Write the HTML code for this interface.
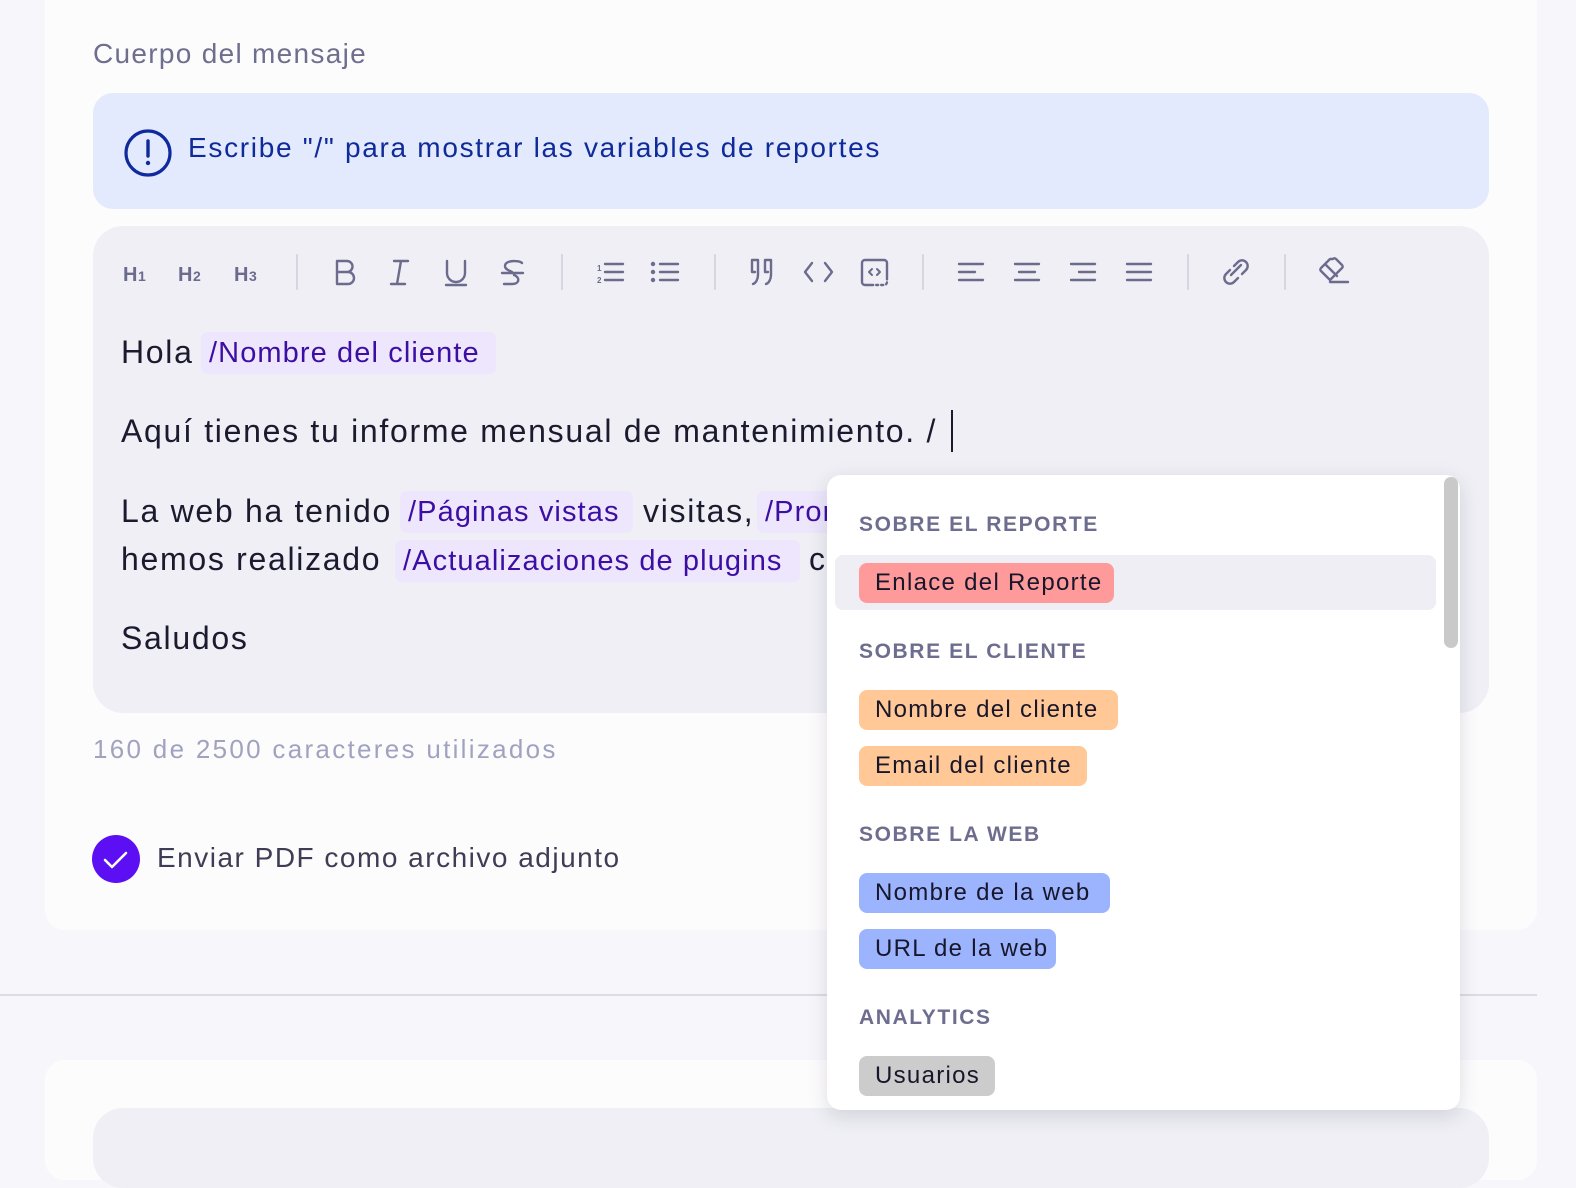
<!DOCTYPE html>
<html><head><meta charset="utf-8"><style>
*{margin:0;padding:0;box-sizing:border-box}
body{width:1576px;height:1136px;background:#f7f7fb;position:relative;overflow:hidden;font-family:"Liberation Sans",sans-serif}
.a{position:absolute;white-space:nowrap}
.t{font-size:32px;color:#1b1a2e;letter-spacing:1.7px;line-height:40px}
.tag{position:absolute;background:#ede6fc;border-radius:7px;color:#3d0ea3;font-size:29px;line-height:42px;padding-left:8px;letter-spacing:1.1px;white-space:nowrap;overflow:hidden}
.h{position:absolute;left:859px;font-size:21px;font-weight:bold;color:#6d6d8f;letter-spacing:1.6px;line-height:26px}
.p{position:absolute;left:859px;height:40px;border-radius:8px;font-size:24px;line-height:40px;padding-left:16px;color:#17162b;letter-spacing:1.3px;white-space:nowrap}
</style></head><body>
<div class="a" style="left:45px;top:-20px;width:1492px;height:950px;background:#fdfcfd;border-radius:20px"></div>
<div class="a" style="left:0;top:994px;width:1537px;height:2px;background:#dcdce6"></div>
<div class="a" style="left:45px;top:1060px;width:1492px;height:120px;background:#fdfcfd;border-radius:20px"></div>
<div class="a" style="left:93px;top:1108px;width:1396px;height:80px;background:#efeff5;border-radius:30px"></div>

<div class="a" style="left:93px;top:38px;font-size:28px;color:#6e6e8e;letter-spacing:1.3px">Cuerpo del mensaje</div>

<div class="a" style="left:93px;top:93px;width:1396px;height:116px;background:#e3eafd;border-radius:20px"></div>
<svg class="a" style="left:122px;top:128px" width="52" height="52"><circle cx="26" cy="25" r="22" fill="none" stroke="#0f2a9c" stroke-width="3.2"/><line x1="26" y1="13" x2="26" y2="28" stroke="#0f2a9c" stroke-width="3.4" stroke-linecap="round"/><circle cx="26" cy="35" r="2.2" fill="#0f2a9c"/></svg>
<div class="a" style="left:188px;top:132px;font-size:28px;color:#0f2a99;letter-spacing:1.7px">Escribe "/" para mostrar las variables de reportes</div>

<div class="a" style="left:93px;top:226px;width:1396px;height:487px;background:#efeff5;border-radius:30px"></div>

<svg class="a" style="left:0;top:240px" width="1400" height="64" fill="none" stroke="#6b6b8e" stroke-width="2.4" stroke-linecap="round" stroke-linejoin="round">
<g font-family="Liberation Sans" font-size="20" fill="#6b6b8e" stroke="none" font-weight="bold"><text x="123" y="41">H</text><text x="138" y="41" font-size="14">1</text><text x="178" y="41">H</text><text x="193" y="41" font-size="14">2</text><text x="234" y="41">H</text><text x="249" y="41" font-size="14">3</text></g>
<g stroke="#d6d6e3" stroke-width="2"><line x1="297" y1="15" x2="297" y2="49"/><line x1="562" y1="15" x2="562" y2="49"/><line x1="715" y1="15" x2="715" y2="49"/><line x1="923" y1="15" x2="923" y2="49"/><line x1="1188" y1="15" x2="1188" y2="49"/><line x1="1285" y1="15" x2="1285" y2="49"/></g>
<path d="M337 21h10a5.5 5.5 0 0 1 0 11h-10zM337 32h11a6 6 0 0 1 0 12h-11z"/>
<path d="M394 21h14M391 44h14M401 21l-4 23"/>
<path d="M447 21v12a9 9 0 0 0 18 0v-12M446 45h20"/>
<path d="M522 23c-3-3-17-3-17 3 0 4 6 5 7 6M502 33h21M514 35c6 2 6 9-2 9h-8"/>
<g font-family="Liberation Sans" font-size="8" fill="#6b6b8e" stroke="none" font-weight="bold"><text x="597" y="31">1</text><text x="597" y="43">2</text></g>
<path d="M605 24h18M605 32h18M605 40h18M660 24h18M660 32h18M660 40h18"/>
<circle cx="653" cy="24" r="1" fill="#6b6b8e"/><circle cx="653" cy="32" r="1" fill="#6b6b8e"/><circle cx="653" cy="40" r="1" fill="#6b6b8e"/>
<path d="M752 20h6v15c0 4-2 8-5 9M752 20v12h3M765 20h6v15c0 4-2 8-5 9M765 20v12h3"/>
<path d="M812 23l-7 9 7 9M825 23l7 9-7 9"/>
<rect x="862" y="20" width="25" height="25" rx="3" stroke-dasharray="40 3 2 3 2 3 2 3 200"/>
<path d="M872 29l-3 3 3 3M877 29l3 3-3 3" stroke-width="2"/>
<path d="M959 24h24M959 32h16M959 40h24M1015 24h24M1019 32h16M1015 40h24M1071 24h24M1079 32h16M1071 40h24M1127 24h24M1127 32h24M1127 40h24"/>
<path d="M1234 26l4-4a5.5 5.5 0 0 1 8 8l-4 4M1238 38l-4 4a5.5 5.5 0 0 1-8-8l4-4M1231 35l10-10"/>
<path d="M1330 19l-9 9a2 2 0 0 0 0 3l9 9 12-12a2 2 0 0 0 0-3l-6-6a2 2 0 0 0-3 0zM1325 24l12 12M1330 42h18"/>
</svg>

<div class="a t" style="left:121px;top:332px">Hola</div>
<div class="tag" style="left:201px;top:332px;width:295px">/Nombre del cliente</div>
<div class="a t" style="left:121px;top:411px">Aquí tienes tu informe mensual de mantenimiento. /</div>
<div class="a" style="left:951px;top:410px;width:2px;height:42px;background:#1b1a2e"></div>
<div class="a t" style="left:121px;top:491px">La web ha tenido</div>
<div class="tag" style="left:400px;top:491px;width:233px">/Páginas vistas</div>
<div class="a t" style="left:643px;top:491px">visitas,</div>
<div class="tag" style="left:757px;top:491px;width:120px">/Promedio</div>
<div class="a t" style="left:121px;top:539px">hemos realizado</div>
<div class="tag" style="left:395px;top:540px;width:405px">/Actualizaciones de plugins</div>
<div class="a t" style="left:809px;top:539px">c</div>
<div class="a t" style="left:121px;top:618px">Saludos</div>

<div class="a" style="left:93px;top:734px;font-size:26px;color:#a0a3bf;letter-spacing:2.3px">160 de 2500 caracteres utilizados</div>
<svg class="a" style="left:92px;top:835px" width="48" height="48"><circle cx="24" cy="24" r="24" fill="#5b0ff2"/><path d="M13 25l7 7 14-14" fill="none" stroke="#fff" stroke-width="2.6" stroke-linecap="round" stroke-linejoin="round"/></svg>
<div class="a" style="left:157px;top:842px;font-size:28px;color:#3f3d56;letter-spacing:1.5px">Enviar PDF como archivo adjunto</div>

<div class="a" style="left:827px;top:475px;width:633px;height:635px;background:#fff;border-radius:14px;box-shadow:0 6px 20px rgba(40,40,70,0.15)"></div>
<div class="a" style="left:1444px;top:477px;width:14px;height:171px;background:#c9c9c9;border-radius:7px"></div>
<div class="a" style="left:835px;top:555px;width:601px;height:55px;background:#eeeef4;border-radius:8px"></div>
<div class="h" style="top:512px">SOBRE EL REPORTE</div>
<div class="p" style="top:563px;width:255px;background:#ff9a9a">Enlace del Reporte</div>
<div class="h" style="top:639px">SOBRE EL CLIENTE</div>
<div class="p" style="top:690px;width:259px;background:#ffc896">Nombre del cliente</div>
<div class="p" style="top:746px;width:228px;background:#ffc896">Email del cliente</div>
<div class="h" style="top:822px">SOBRE LA WEB</div>
<div class="p" style="top:873px;width:251px;background:#9cb3fd">Nombre de la web</div>
<div class="p" style="top:929px;width:197px;background:#9cb3fd">URL de la web</div>
<div class="h" style="top:1005px">ANALYTICS</div>
<div class="p" style="top:1056px;width:136px;background:#cccccc">Usuarios</div>
</body></html>
